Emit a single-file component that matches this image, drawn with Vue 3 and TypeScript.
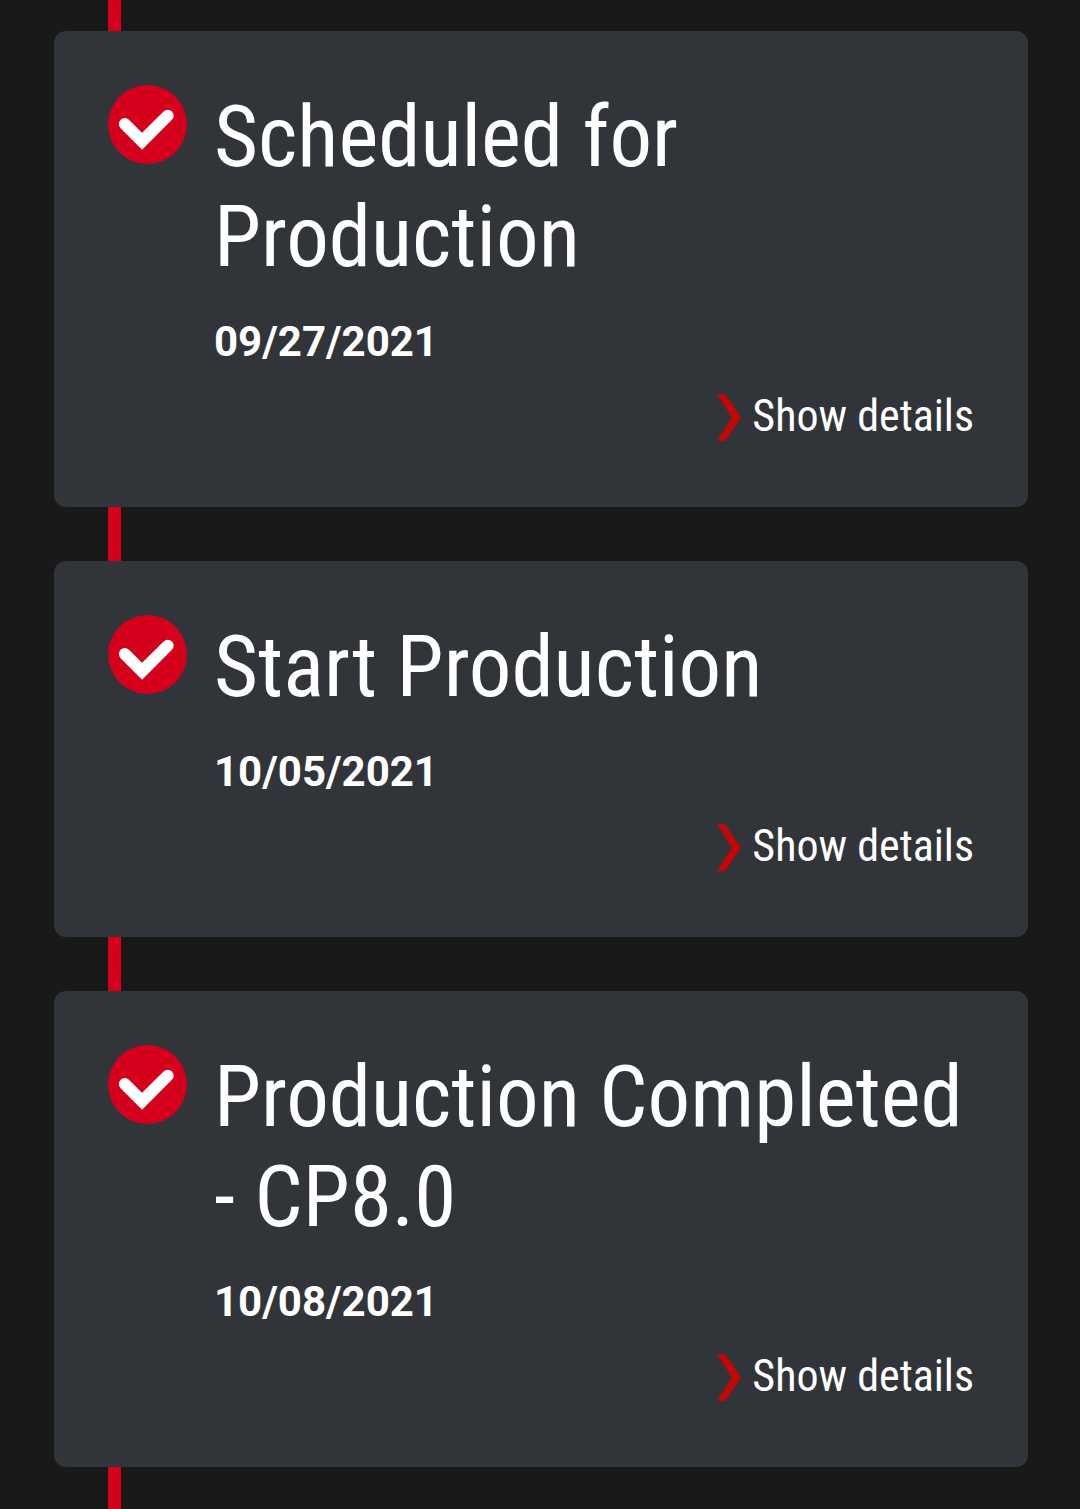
<script setup lang="ts">
interface Milestone {
  title: string
  date: string
  iso: string
}

const milestones: Milestone[] = [
  { title: 'Scheduled for Production', date: '09/27/2021', iso: '2021-09-27' },
  { title: 'Start Production', date: '10/05/2021', iso: '2021-10-05' },
  { title: 'Production Completed - CP8.0', date: '10/08/2021', iso: '2021-10-08' },
]
</script>

<template>
  <main>
    <ol class="timeline">
      <li v-for="item in milestones" :key="item.iso" class="card">
        <svg class="badge" viewBox="0 0 80 80" aria-hidden="true">
          <circle cx="40" cy="40" r="40" fill="#d5001c" />
          <path
            d="M17 39.5 34.5 57 60.5 31"
            fill="none"
            stroke="#fff"
            stroke-width="12"
            stroke-linecap="round"
            stroke-linejoin="miter"
          />
        </svg>
        <div class="content">
          <h2 class="title">{{ item.title }}</h2>
          <time class="date" :datetime="item.iso">{{ item.date }}</time>
          <button type="button" class="details">
            <svg class="chevron" viewBox="0 0 26 50" aria-hidden="true">
              <path d="M1 3H9L25 26.5 9 50H1L16 26.5Z" fill="#c40606" />
            </svg>
            <span>Show details</span>
          </button>
        </div>
      </li>
    </ol>
  </main>
</template>

<style>
body {
  margin: 0;
  background: #191919;
}
</style>

<style scoped>
.timeline {
  display: flex;
  flex-direction: column;
  gap: 54px;
  margin: 0;
  padding: 31px 52px 42px 54px;
  list-style: none;
  color: #fff;
  font-family: "Roboto Condensed", Roboto, "Liberation Sans", sans-serif;
  background: linear-gradient(#d5001c, #d5001c) 108px 0 / 13px 100% no-repeat;
}

.card {
  display: flex;
  align-items: flex-start;
  gap: 27px;
  padding: 54px 54px 66px;
  border-radius: 12px;
  background: #313539;
}

.badge {
  flex: none;
  width: 79px;
  height: 79px;
}

.content {
  display: flex;
  flex: 1;
  flex-direction: column;
  min-width: 0;
}

.title {
  margin: 0 0 30px;
  padding-top: 2px;
  font-size: 85px;
  font-weight: 400;
  line-height: 100px;
}

.date {
  font-family: Roboto, "Liberation Sans", sans-serif;
  font-size: 42px;
  font-weight: 700;
  line-height: 50px;
}

.details {
  display: flex;
  align-items: center;
  align-self: flex-end;
  gap: 10px;
  margin: 24px 0 0;
  padding: 0;
  border: 0;
  background: none;
  color: inherit;
  font: inherit;
  font-size: 44px;
  line-height: 50px;
  cursor: pointer;
}

.chevron {
  flex: none;
  width: 26px;
  height: 50px;
}
</style>
